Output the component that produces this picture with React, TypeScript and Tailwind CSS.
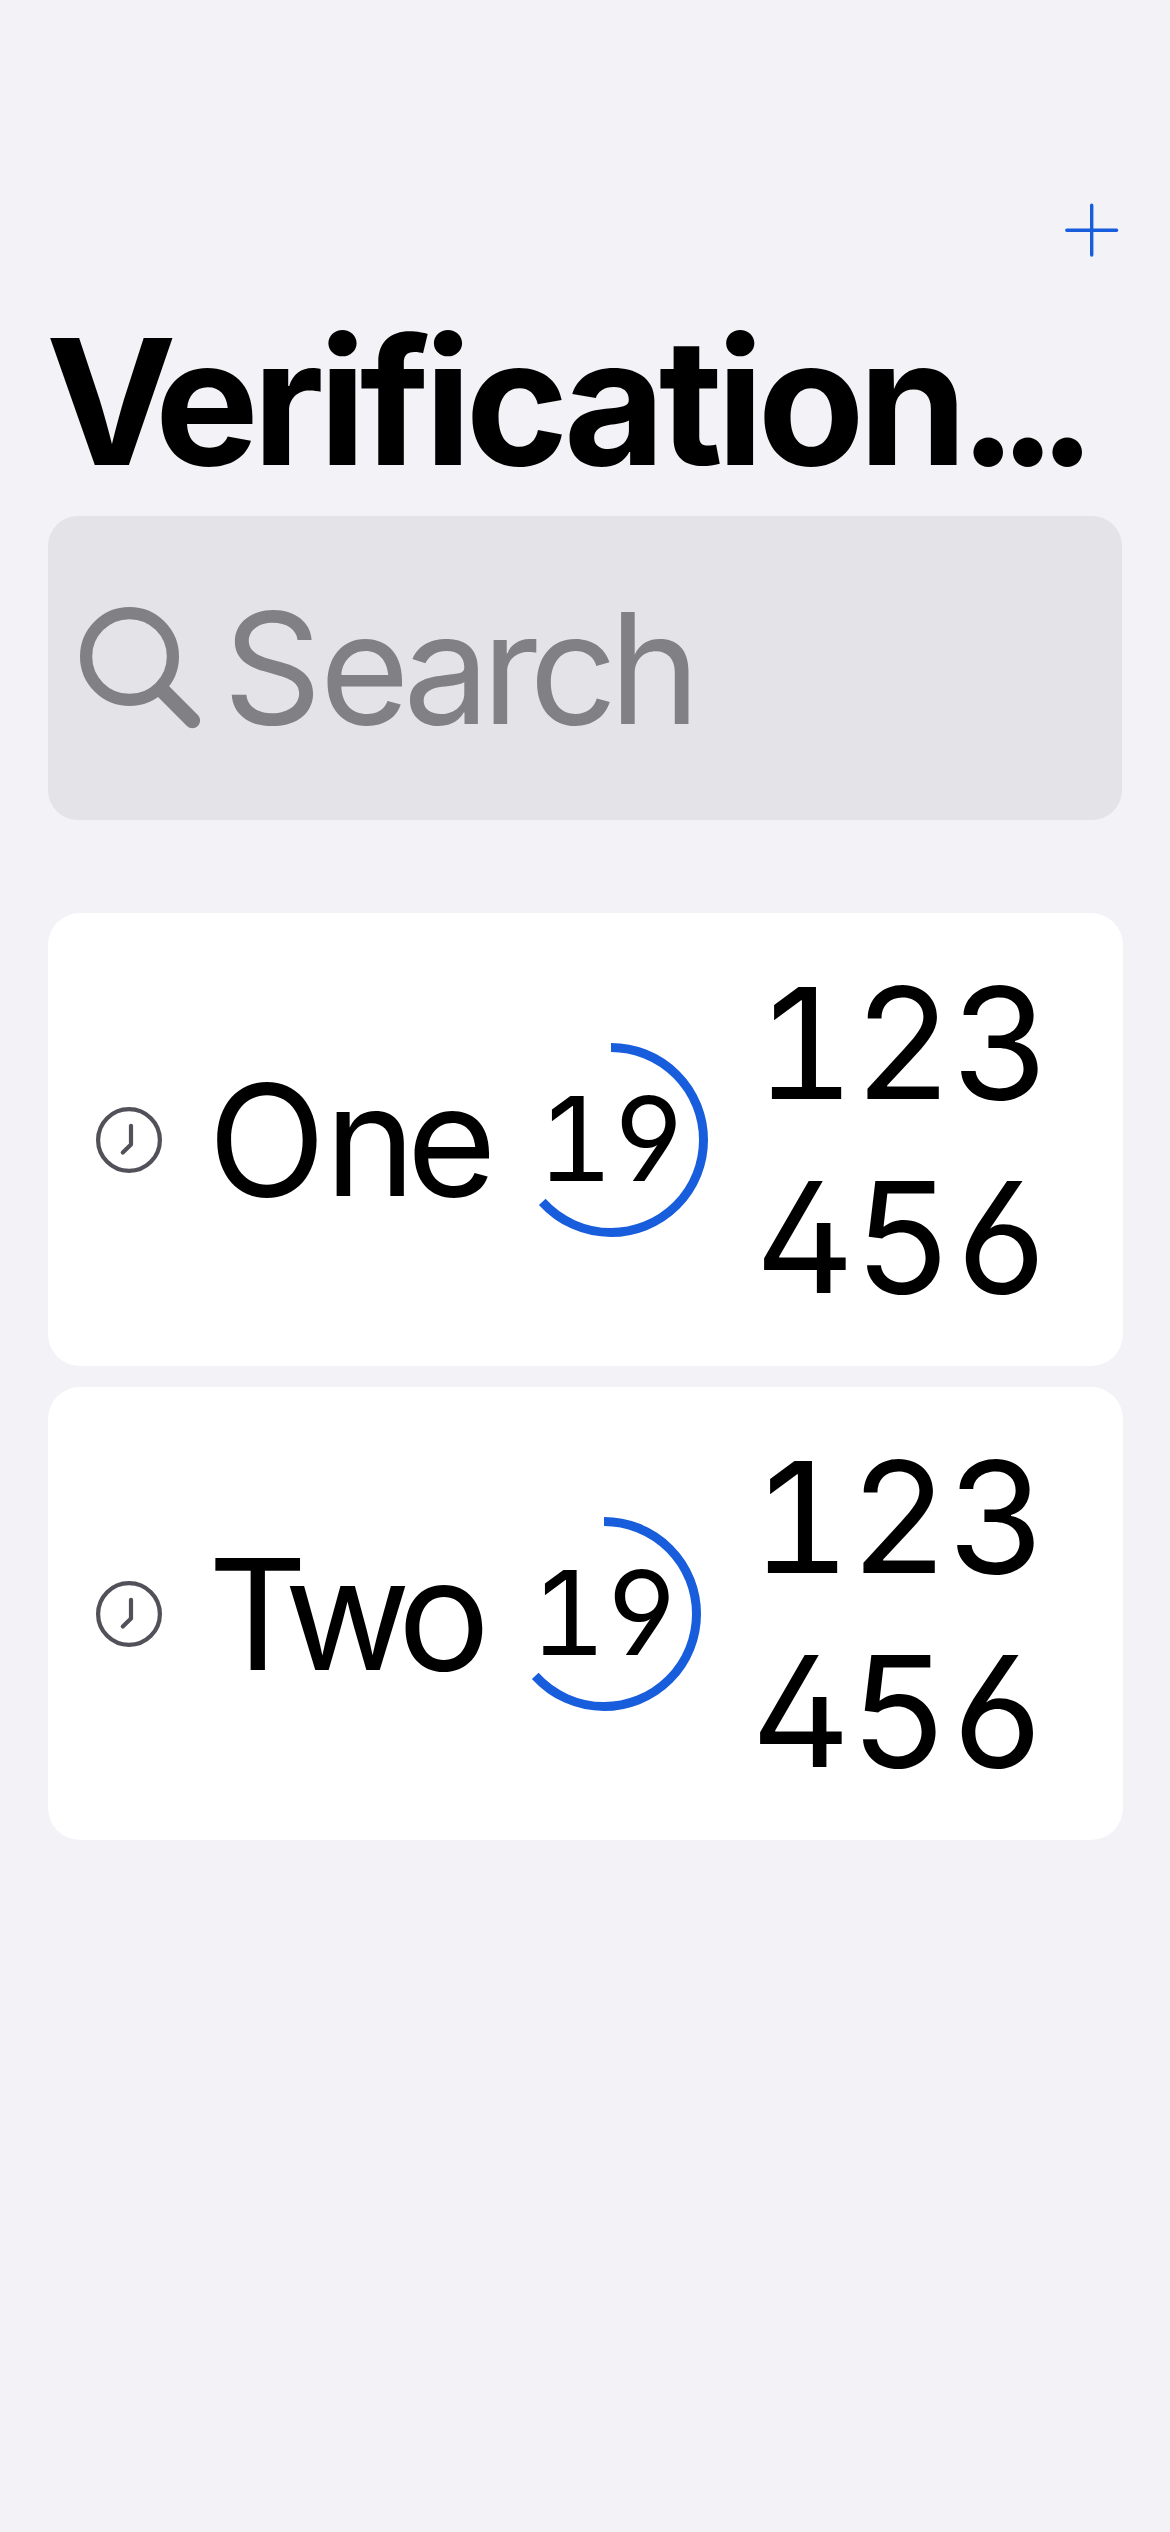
type Account = {
  head: string;
  tail: string;
  headClass: string;
  tailClass: string;
  nameClass: string;
  code: [string, string];
  codeClass: string;
};

const accounts: Account[] = [
  {
    head: "O",
    tail: "ne",
    headClass: "tracking-[-1px]",
    tailClass: "tracking-[-9px]",
    nameClass: "w-[306px]",
    code: ["123", "456"],
    codeClass: "ml-[47px]",
  },
  {
    head: "T",
    tail: "wo",
    headClass: "tracking-[-23px]",
    tailClass: "tracking-[-10px]",
    nameClass: "w-[299px]",
    code: ["123", "456"],
    codeClass: "ml-[50px]",
  },
];

function PlusIcon() {
  return (
    <svg width="54" height="54" viewBox="0 0 54 54" fill="none" stroke="#175ddc" strokeWidth="3.4" strokeLinecap="round">
      <path d="M26.7 2.3V52.1M1.8 27.2H51.6" />
    </svg>
  );
}

function SearchIcon() {
  return (
    <svg className="shrink-0" width="120" height="122" viewBox="0 0 120 122" fill="none" stroke="#808085">
      <circle cx="49.5" cy="49.5" r="43.4" strokeWidth="12.2" />
      <path d="M83 84L112.4 113.5" strokeWidth="15.4" strokeLinecap="round" />
    </svg>
  );
}

function ClockIcon() {
  return (
    <svg
      className="shrink-0"
      width="66"
      height="66"
      viewBox="0 0 66 66"
      fill="none"
      stroke="#525159"
      strokeWidth="4.2"
      strokeLinecap="round"
      strokeLinejoin="round"
    >
      <circle cx="33" cy="33" r="30.9" />
      <path d="M35 18.8V37.5L26.8 45.5" />
    </svg>
  );
}

function Countdown({ seconds, period }: { seconds: number; period: number }) {
  const length = (seconds / period) * 100;
  return (
    <div className="grid size-[194px] shrink-0 place-items-center">
      <svg className="col-start-1 row-start-1 -rotate-90" width="194" height="194" viewBox="0 0 194 194" fill="none">
        <circle cx="97" cy="97" r="92.5" stroke="#175ddc" strokeWidth="9" pathLength="100" strokeDasharray={`${length} 100`} />
      </svg>
      <span className="col-start-1 row-start-1 text-[116.5px] leading-none tracking-[-2px] [font-feature-settings:'tnum','cv02','cv03','cv04']">
        {seconds}
      </span>
    </div>
  );
}

function AccountRow({ account }: { account: Account }) {
  return (
    <li className="flex h-[453px] items-center rounded-[32px] bg-white pl-12 text-[154px]">
      <ClockIcon />
      <span className={`ml-[46px] shrink-0 leading-none whitespace-nowrap ${account.nameClass}`}>
        <span className={account.headClass}>{account.head}</span>
        <span className={account.tailClass}>{account.tail}</span>
      </span>
      <Countdown seconds={19} period={30} />
      <span
        className={`flex flex-col items-start leading-[194px] tracking-[-1.6px] [font-feature-settings:'tnum','cv02','cv03','cv04'] ${account.codeClass}`}
      >
        <span>{account.code[0]}</span>
        <span>{account.code[1]}</span>
      </span>
    </li>
  );
}

export default function App() {
  return (
    <main className="flex min-h-[2532px] w-[1170px] flex-col bg-[#f2f2f7] px-12 font-['Inter',sans-serif] text-black">
      <header className="flex h-[300px] items-start justify-end pt-[203px] pr-[3px]">
        <PlusIcon />
      </header>
      <h1 className="-ml-0.5 h-[203px] text-[175px] leading-[203px] font-bold whitespace-nowrap">
        <span className="tracking-[-22px]">V</span>
        <span className="tracking-[-6.4px]">erification</span>
        <span className="-ml-0.5 tracking-[-19px]">...</span>
      </h1>
      <div className="mt-[13px] flex h-[304px] w-[1074px] items-center rounded-[30px] bg-[#e3e3e8] pl-8 text-[154px] leading-none text-[#808085]">
        <SearchIcon />
        <span className="ml-[23px] whitespace-nowrap">
          <span className="tracking-[-2px]">S</span>
          <span className="tracking-[-7.9px]">earch</span>
        </span>
      </div>
      <ul className="mt-[93px] flex w-[1075px] flex-col gap-[21px]">
        {accounts.map((account) => (
          <AccountRow key={account.head} account={account} />
        ))}
      </ul>
    </main>
  );
}
